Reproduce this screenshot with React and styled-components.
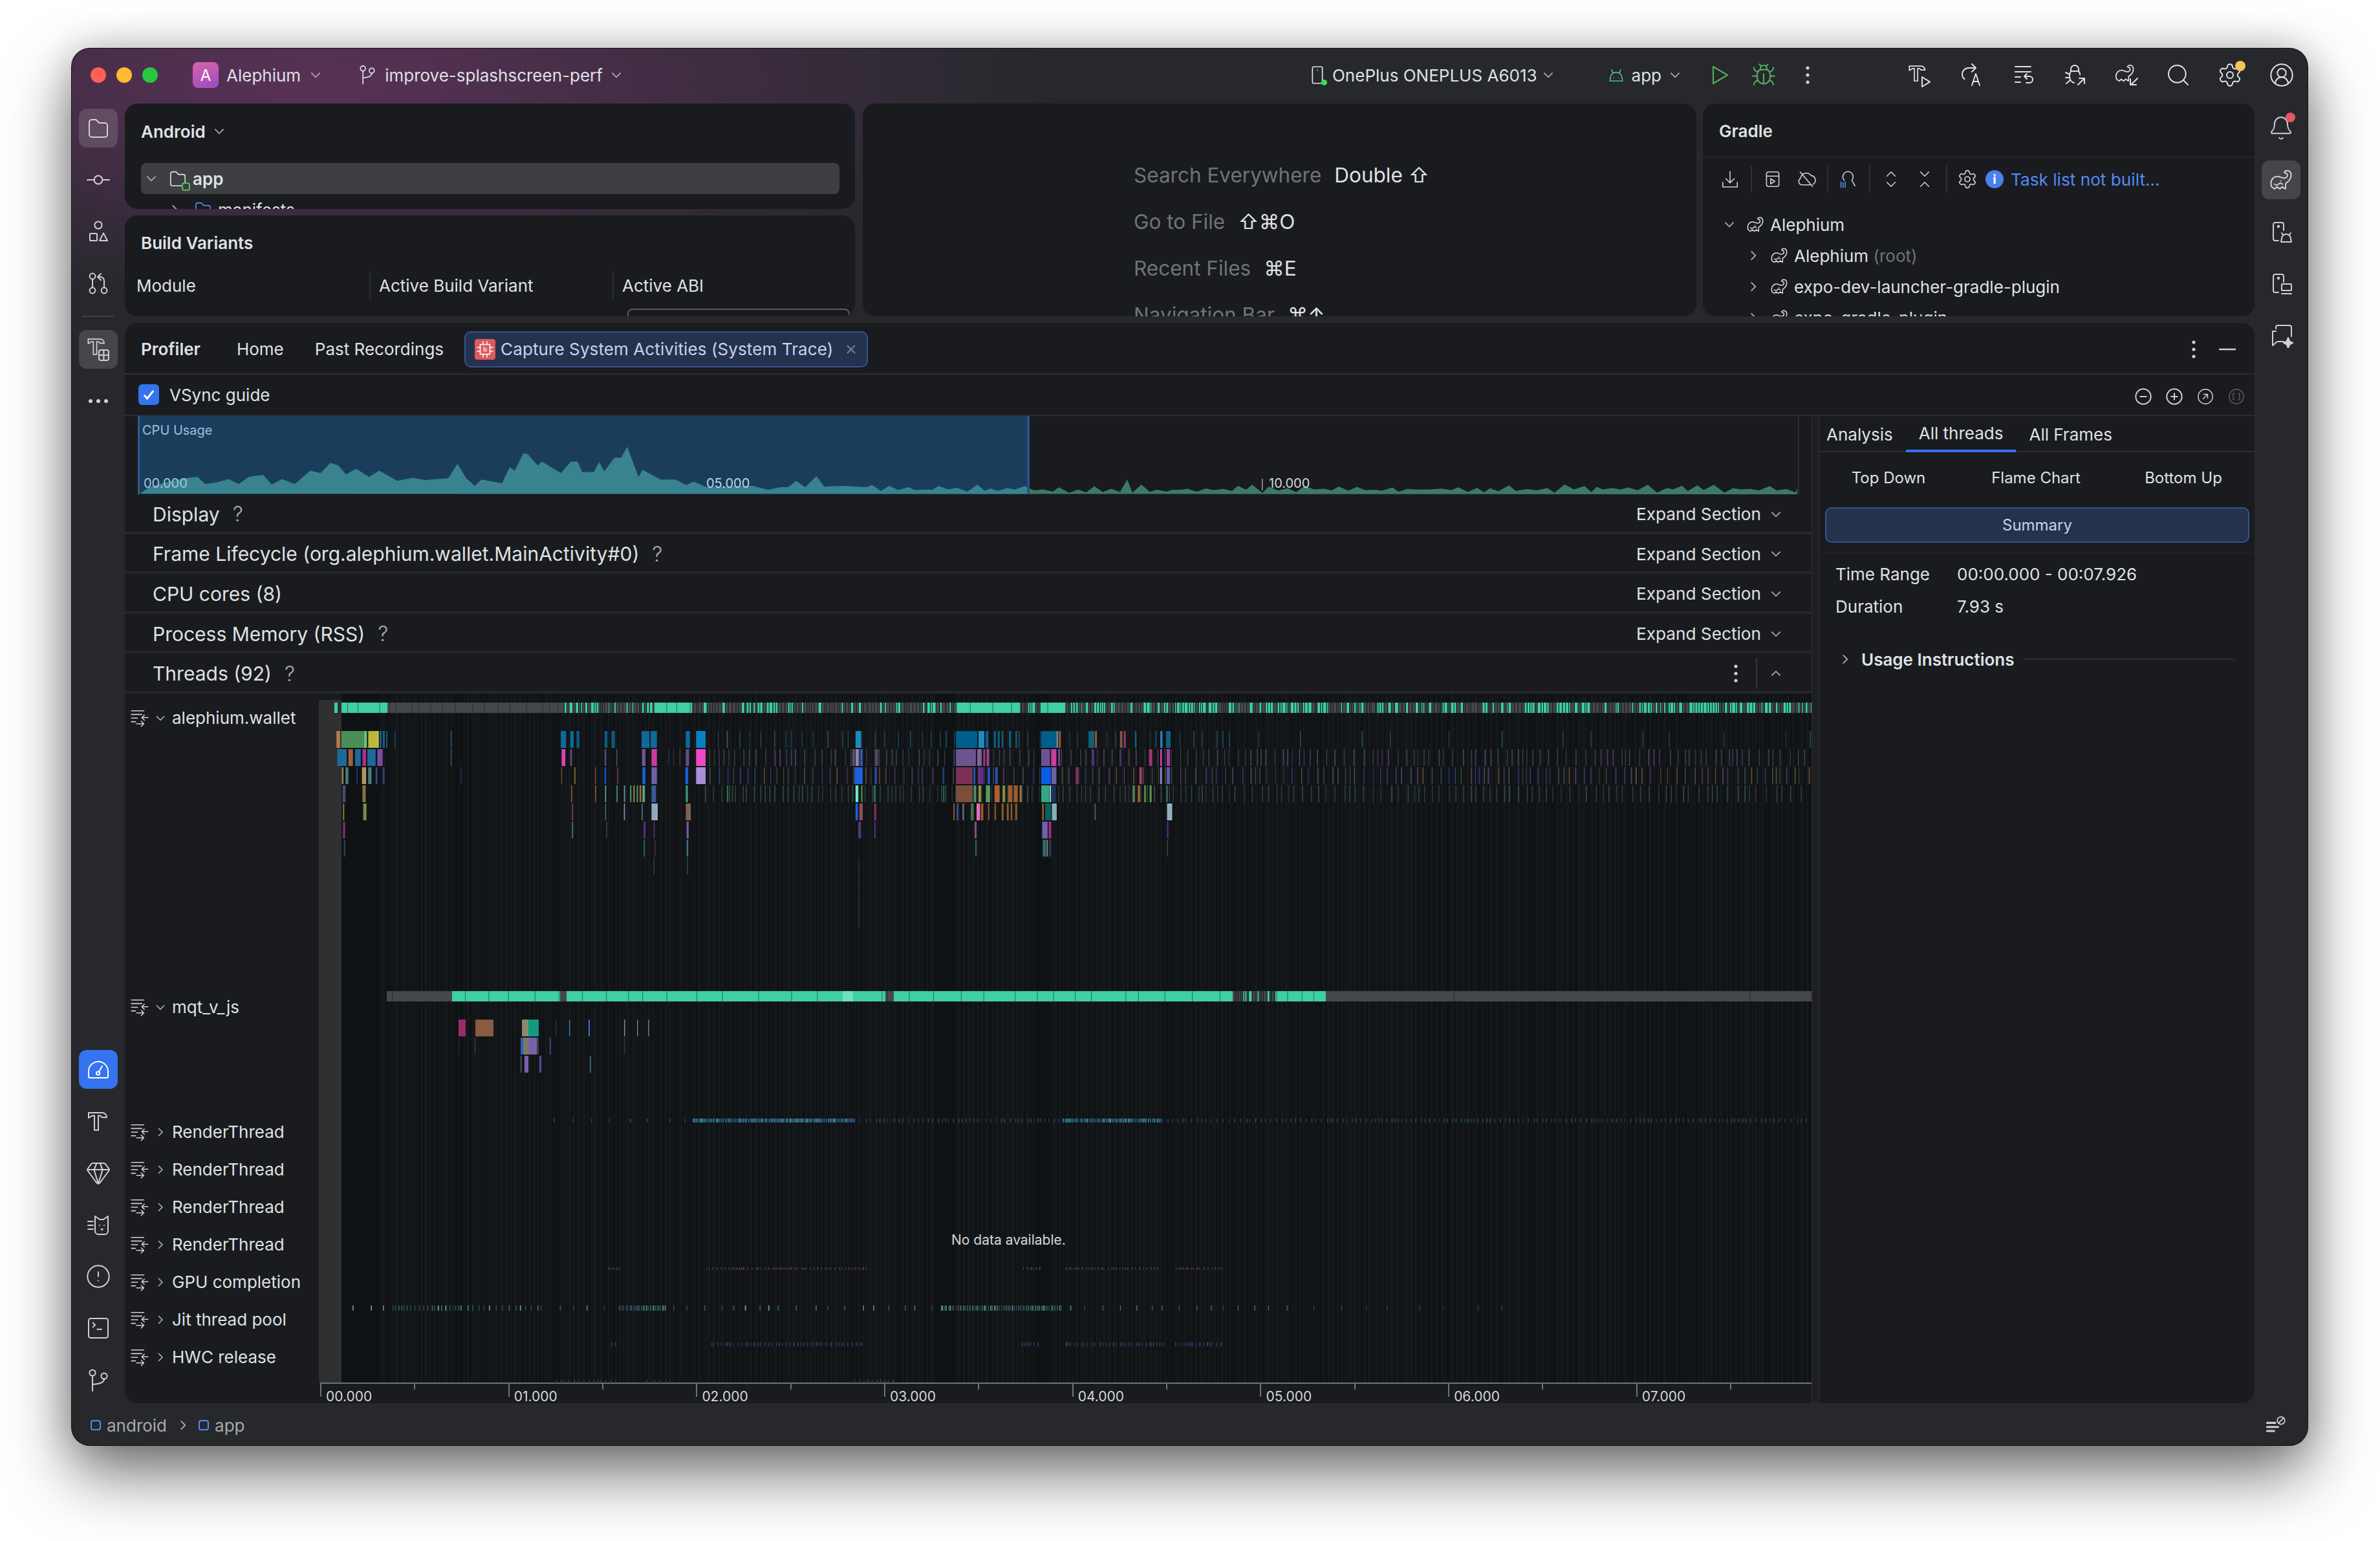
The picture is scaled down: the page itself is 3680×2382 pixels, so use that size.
import React from "react";
import styled, { createGlobalStyle } from "styled-components";
import {
  Bell,
  Bug,
  CircleAlert,
  CircleMinus,
  CirclePlus,
  CircleUserRound,
  Gem,
  Search,
  Settings,
  SquareTerminal,
} from "lucide-react";

const Global = createGlobalStyle`
  html, body {
    margin: 0;
    background: #fff;
    width: 3680px;
    height: 2382px;
    overflow: hidden;
  }
  * {
    box-sizing: border-box;
  }
`;

const FONT = `Inter, "Noto Sans", "DejaVu Sans", sans-serif`;

const Page = styled.div`
  padding: 75px 112px 148px 111px;
  font-family: ${FONT};
  font-size: 26px;
  color: #dfe1e5;
  white-space: nowrap;
`;

const Window = styled.div`
  display: flex;
  flex-direction: column;
  width: 3457px;
  height: 2159px;
  border-radius: 28px;
  overflow: hidden;
  background:
    radial-gradient(1150px 340px at 380px 50px, rgba(104, 52, 100, 0.78), transparent 100%),
    #26282c;
  box-shadow:
    0 0 0 1px #111,
    0 44px 100px rgba(0, 0, 0, 0.55),
    0 0 60px rgba(0, 0, 0, 0.2);
`;

const TitleBar = styled.div`
  display: flex;
  align-items: center;
  height: 85px;
  flex: none;
  padding: 0 20px 3px 29px;
`;

const Lights = styled.div`
  display: flex;
  gap: 16px;
  margin-right: 54px;
`;

const Light = styled.span`
  width: 24px;
  height: 24px;
  border-radius: 50%;
  background: ${(p) => p.$color};
`;

const ProjectBadge = styled.span`
  width: 40px;
  height: 40px;
  border-radius: 8px;
  background: linear-gradient(160deg, #d863a8, #9a4cc4);
  color: #fff;
  font-size: 24px;
  display: flex;
  align-items: center;
  justify-content: center;
`;

const TitleItem = styled.div`
  display: flex;
  align-items: center;
  gap: ${(p) => p.$gap ?? 11}px;
  margin-left: ${(p) => p.$left ?? 0};
  margin-right: ${(p) => p.$right ?? 0}px;
`;

const Body = styled.div`
  display: flex;
  flex: 1;
  min-height: 0;
`;

const Strip = styled.div`
  width: 82px;
  flex: none;
  display: flex;
  flex-direction: column;
  align-items: center;
  gap: 20px;
  padding: 8px 0 6px;
  color: #ced0d6;
`;

const StripBottom = styled.div`
  margin-top: auto;
  display: flex;
  flex-direction: column;
  align-items: center;
  gap: 20px;
`;

const ToolButton = styled.div`
  width: 60px;
  height: 60px;
  border-radius: 12px;
  display: flex;
  align-items: center;
  justify-content: center;
  background: ${(p) =>
    p.$active ? "#3574f0" : p.$selected ? "rgba(255,255,255,0.14)" : "transparent"};
  color: ${(p) => (p.$active ? "#fff" : "#ced0d6")};
`;

const StripSep = styled.div`
  width: 50px;
  height: 2px;
  background: #3c3f44;
`;

const Center = styled.div`
  flex: 1;
  min-width: 0;
  display: flex;
  flex-direction: column;
  gap: 10px;
`;

const TopRow = styled.div`
  display: flex;
  height: 329px;
  flex: none;
`;

const TopColumn = styled.div`
  width: 1129px;
  flex: none;
  display: flex;
  flex-direction: column;
  gap: 10px;
  margin-right: 12px;
`;

const Panel = styled.div`
  background: #191b1e;
  border-radius: 20px;
  overflow: hidden;
  position: relative;
`;

const AndroidPanel = styled(Panel)`
  height: 163px;
  padding: 0 24px 0 25px;
`;

const BuildPanel = styled(Panel)`
  height: 156px;
`;

const PanelTitle = styled.div`
  display: flex;
  align-items: center;
  gap: 10px;
  height: 86px;
  font-weight: 600;
  color: #dfe1e5;
  flex: none;
`;

const BuildTitle = styled.div`
  height: 84px;
  padding-left: 25px;
  display: flex;
  align-items: center;
  font-weight: 600;
`;

const TreeSelected = styled.div`
  height: 48px;
  margin-top: 6px;
  border-radius: 8px;
  background: #3d3f43;
  display: flex;
  align-items: center;
  font-weight: 600;
  padding-left: 5px;
  gap: 7px;
`;

const TreeRow = styled.div`
  height: 48px;
  display: flex;
  align-items: center;
  padding-left: ${(p) => p.$indent}px;
  gap: ${(p) => p.$gap ?? 7}px;
`;

const Spacer = styled.span`
  width: ${(p) => p.$w}px;
  flex: none;
`;

const ModuleTag = styled.span`
  position: absolute;
  right: -3px;
  bottom: -3px;
  width: 13px;
  height: 13px;
  border: 2px solid #5fb865;
  border-radius: 4px;
  background: #3d3f43;
`;

const VariantHead = styled.div`
  display: grid;
  grid-template-columns: 360px 376px 1fr;
  height: 44px;
  margin-left: 18px;
  margin-top: 2px;
`;

const VariantCell = styled.div`
  display: flex;
  align-items: center;
  position: relative;
  &:not(:first-child) {
    padding-left: 13px;
    border-left: 2px solid #2b2d30;
  }
`;

const ComboTop = styled.div`
  position: absolute;
  left: 777px;
  right: 8px;
  bottom: -20px;
  height: 32px;
  border: 2px solid #5a5d63;
  border-radius: 8px;
`;

const EmptyPanel = styled(Panel)`
  width: 1289px;
  flex: none;
  margin-right: 10px;
  padding: 74px 0 0 419px;
`;

const HintRow = styled.div`
  height: 72px;
  display: flex;
  align-items: center;
  gap: 20px;
  font-size: 31.5px;
  color: #6f737a;
`;

const HintKey = styled.span`
  color: #dfe1e5;
`;

const GradlePanel = styled(Panel)`
  flex: 1;
  min-width: 0;
`;

const GradleHead = styled.div`
  height: 84px;
  padding: 2px 0 0 25px;
  display: flex;
  align-items: center;
  font-weight: 600;
  border-bottom: 2px solid #25272b;
`;

const GradleTools = styled.div`
  height: 66px;
  display: flex;
  align-items: center;
  padding-left: 26px;
  color: #ced0d6;
`;

const ToolSlot = styled.span`
  width: ${(p) => p.$w ?? 52}px;
  flex: none;
  display: flex;
  align-items: center;
  justify-content: flex-start;
`;

const ToolSep = styled.span`
  width: 2px;
  height: 42px;
  background: #2f3135;
  flex: none;
  margin-right: ${(p) => p.$after ?? 16}px;
`;

const InfoDot = styled.span`
  width: 28px;
  height: 28px;
  border-radius: 50%;
  background: #4a80ee;
  color: #fff;
  font-size: 20px;
  font-weight: 700;
  display: flex;
  align-items: center;
  justify-content: center;
  flex: none;
`;

const LinkText = styled.span`
  color: #548af7;
  margin-left: 11px;
  font-size: 26.2px;
`;

const GradleTree = styled.div`
  padding-top: 13px;
`;

const TreeName = styled.span`
  margin-left: -6px;
`;

const Muted = styled.span`
  color: #6f737a;
`;

const MainPanel = styled(Panel)`
  flex: 1;
  min-height: 0;
  display: flex;
  flex-direction: column;
`;

const TabBar = styled.div`
  height: 80px;
  flex: none;
  display: flex;
  align-items: center;
  padding: 3px 22px 0 25px;
  border-bottom: 2px solid #2b2d30;
`;

const ToolTitle = styled.span`
  font-weight: 600;
  margin-right: 56px;
`;

const PlainTab = styled.span`
  margin-right: ${(p) => p.$right}px;
`;

const CaptureTab = styled.div`
  height: 56px;
  width: 624px;
  display: flex;
  align-items: center;
  padding: 0 14px;
  gap: 8px;
  background: #25324d;
  border: 2px solid #35538f;
  border-radius: 10px;
  color: #c5d2ee;
  letter-spacing: 0.1px;
`;

const ChipIcon = styled.span`
  width: 32px;
  height: 32px;
  border-radius: 4px;
  background: #db5c5c;
  flex: none;
  display: flex;
  align-items: center;
  justify-content: center;
`;

const TabClose = styled.span`
  margin-left: auto;
  color: #7e8594;
  display: flex;
`;

const PushRight = styled.div`
  margin-left: auto;
  margin-top: ${(p) => p.$top ?? 0}px;
  display: flex;
  align-items: center;
  gap: ${(p) => p.$gap ?? 20}px;
  color: #ced0d6;
`;

const VsyncRow = styled.div`
  height: 64px;
  flex: none;
  display: flex;
  align-items: center;
  padding: 0 14px 0 21px;
  gap: 16px;
  border-bottom: 2px solid #2b2d30;
`;

const CheckBox = styled.span`
  width: 32px;
  height: 32px;
  border-radius: 6px;
  background: #3574f0;
  display: flex;
  align-items: center;
  justify-content: center;
`;

const Split = styled.div`
  flex: 1;
  min-height: 0;
  display: flex;
`;

const LeftPane = styled.div`
  width: 2608px;
  flex: none;
  display: flex;
  flex-direction: column;
`;

const PaneGutter = styled.div`
  width: 13px;
  flex: none;
  background: #1d1f22;
  border-left: 2px solid #25272b;
  border-right: 2px solid #25272b;
`;

const RightPane = styled.div`
  flex: 1;
  min-width: 0;
`;

const CpuWrap = styled.div`
  height: 121px;
  flex: none;
  margin: 0 19px 0 20px;
  position: relative;
  border-right: 2px solid #2b2d30;
`;

const CpuLabel = styled.span`
  position: absolute;
  left: ${(p) => p.$x}px;
  top: ${(p) => p.$y}px;
  font-size: 20px;
  line-height: 24px;
  color: ${(p) => p.$color ?? "#d2d6de"};
`;

const SectionRow = styled.div`
  height: 61.6px;
  flex: none;
  display: flex;
  align-items: center;
  padding: 4px 44px 0 43px;
  border-bottom: 4px solid #25272b;
  font-size: 30px;
`;

const Question = styled.span`
  font-size: 32px;
  font-weight: 300;
  color: #a8abb1;
  margin-left: 20px;
`;

const ExpandLabel = styled.span`
  margin-left: auto;
  font-size: 26.2px;
  display: flex;
  align-items: center;
  gap: 12px;
`;

const DottedSep = styled.span`
  width: 0;
  height: 46px;
  border-left: 2px dotted #4a4d52;
`;

const CollapseArrow = styled.span`
  display: flex;
  margin-left: 7px;
`;

const ThreadBody = styled.div`
  flex: 1;
  min-height: 0;
  display: flex;
`;

const LabelColumn = styled.div`
  width: 300px;
  flex: none;
  padding: 14px 0 0 7px;
`;

const ThreadLabel = styled.div`
  height: ${(p) => p.$height}px;
  display: flex;
  align-items: flex-start;
`;

const ThreadLine = styled.div`
  height: 48px;
  display: flex;
  align-items: center;
  gap: 6px;
`;

const ThreadName = styled.span`
  margin-left: 2px;
`;

const ChartColumn = styled.div`
  flex: 1;
  min-width: 0;
  display: flex;
  flex-direction: column;
  position: relative;
`;

const NoData = styled.span`
  position: absolute;
  left: 978px;
  top: 833px;
  font-size: 21px;
  line-height: 24px;
  color: #d4d6da;
`;

const Axis = styled.div`
  flex: 1;
  display: flex;
  margin-left: 2px;
  border-top: 2px solid #6f7276;
  overflow: hidden;
  font-size: 21px;
  color: #d4d6da;
`;

const AxisCell = styled.div`
  width: 145.35px;
  flex: none;
  position: relative;
  padding: 7px 0 0 9px;
  line-height: 26px;
  &::before {
    content: "";
    position: absolute;
    left: 0;
    top: 0;
    width: 2px;
    height: ${(p) => (p.$major ? 20 : 9)}px;
    background: #6f7276;
  }
`;

const AnalysisTabs = styled.div`
  height: 56px;
  display: flex;
  border-bottom: 2px solid #2b2d30;
`;

const AnalysisTab = styled.div`
  height: 56px;
  padding: 0 20px;
  display: flex;
  align-items: center;
  border-bottom: ${(p) => (p.$active ? "4px solid #3574f0" : "none")};
  &:first-child {
    padding-left: 10px;
  }
`;

const SubTabs = styled.div`
  display: grid;
  grid-template-columns: repeat(3, 228px);
  height: 78px;
  margin-left: -8px;
  font-size: 24px;
`;

const SubTab = styled.div`
  display: flex;
  align-items: center;
  justify-content: center;
`;

const SummaryWrap = styled.div`
  padding: 7px 8px 14px;
  border-bottom: 2px solid #1f2124;
`;

const SummaryButton = styled.div`
  height: 55px;
  display: flex;
  align-items: center;
  justify-content: center;
  background: #25324d;
  border: 2px solid #35538f;
  border-radius: 10px;
  color: #c5d2ee;
  font-size: 24px;
`;

const InfoGrid = styled.div`
  display: grid;
  grid-template-columns: 188px 1fr;
  grid-auto-rows: 50px;
  padding: 7px 0 0 24px;
  align-items: center;
`;

const UsageRow = styled.div`
  height: 50px;
  margin-top: 32px;
  display: flex;
  align-items: center;
  padding: 0 31px 0 28px;
  gap: 14px;
  font-weight: 600;
`;

const UsageLine = styled.span`
  flex: 1;
  height: 2px;
  background: #2b2d30;
`;

const StatusBar = styled.div`
  height: 65px;
  flex: none;
  display: flex;
  align-items: center;
  padding: 3px 32px 0 29px;
  gap: 12px;
  color: #a6a9af;
`;

const ModuleDot = styled.span`
  width: 16px;
  height: 16px;
  border: 2px solid #548af7;
  border-radius: 4px;
  flex: none;
  margin-right: -3px;
`;

const CrumbArrow = styled.span`
  display: flex;
  margin: 0 1px 0 2px;
`;

const STROKE = { fill: "none", stroke: "currentColor", strokeWidth: 1, strokeLinecap: "round", strokeLinejoin: "round" };

const ELEPHANT =
  "M12.5 4.2C13 2.8 15.5 2.3 16.8 3.6c1.6 1.6 1.2 4.4-.2 6.4-1 1.4-2 2.2-3 2.8l-.2 4.2-2.4-1.6-2 1.6-2-1.6-2 1.6-2.5-1.8-.3-2.7c0-3 2.4-5.3 5.4-5.1 2.2.2 4 2 6 1 1.4-.7 1.8-2.4.8-3.2-.6-.5-1.2-.2-1.9-1z";
const HAMMER = "M2.5 3.5H13c2 0 3.5 1.6 3.5 3.6H13l-1.5-1.4H10V17H7V5.7H5.5L2.5 7.5z";

const ICONS = {
  folder: <path d="M3 5.5c0-1.1.9-2 2-2h3.2L10.6 6H15a2 2 0 0 1 2 2v7a2 2 0 0 1-2 2H5a2 2 0 0 1-2-2z" />,
  commit: (
    <>
      <circle cx="10" cy="10" r="3.2" />
      <path d="M1.5 10h5.3M13.2 10h5.3" />
    </>
  ),
  structure: (
    <>
      <circle cx="10" cy="5" r="2.8" />
      <rect x="3.5" y="11.5" width="5.5" height="5.5" rx=".5" />
      <path d="M14 11.2l3 5.8h-6z" />
    </>
  ),
  pull: (
    <>
      <circle cx="5.5" cy="4.5" r="2.2" />
      <circle cx="5.5" cy="15.5" r="2.2" />
      <circle cx="14.5" cy="15.5" r="2.2" />
      <path d="M5.5 6.7v6.6M14.5 13.3V8a3 3 0 0 0-3-3H10M12 2.5L9.5 5l2.5 2.5" />
    </>
  ),
  hammerTable: (
    <>
      <path d={HAMMER} transform="translate(0 -1) scale(.88)" />
      <rect x="10.5" y="10.5" width="7.5" height="8" rx="1.5" />
      <path d="M10.5 14.5H18M14.2 10.5v8" />
    </>
  ),
  hammer: <path d={HAMMER} />,
  hammerRun: (
    <>
      <path d={HAMMER} transform="scale(.86)" />
      <path d="M12 11.5l6 3.8-6 3.7z" />
    </>
  ),
  cast: (
    <>
      <path d="M8 4.5C5 4.5 3 6.8 3 9.5c0 1.500.7 2.800 1.800 3.600M8 4.5h5M10.500 1.500l3 3-3 3" />
      <path d="M10.500 18l3-9 3 9M11.600 15h3.800" />
    </>
  ),
  sync: <path d="M4 3.5h12M4 7.500h12M4 11.500h4M4 15.500h4M11 11h4a2.500 2.500 0 0 1 0 5h-2.500M13 9l-2 2 2 2" />,
  bugArrow: (
    <>
      <path d="M10 2.500a3 3 0 0 1 3 3v1.500H7V5.500a3 3 0 0 1 3-3zM7 7c-.7 1-1 2.500-1 4 0 2.500 1.400 4.500 3.500 5M13 7c.6.7 1 1.600 1.100 2.700" />
      <path d="M3 8l3 1.500M3 12h3M3.500 16.500L6.500 14M12.500 17.500l5-5M13.500 12.500h4v4" />
    </>
  ),
  gradleArrow: (
    <>
      <path d={ELEPHANT} transform="scale(.86)" />
      <path d="M18.500 12.500l-5 5M13 13v4.500h4.500" />
    </>
  ),
  elephant: (
    <>
      <path d={ELEPHANT} />
      <path d="M9.800 10.800h.01M5 13.300c1 1 2 1 3 0s2-1 3 0" />
    </>
  ),
  phoneAndroid: (
    <>
      <path d="M8 17H5.500A1.500 1.500 0 0 1 4 15.500v-11A1.500 1.500 0 0 1 5.500 3h5A1.500 1.500 0 0 1 12 4.500V9" />
      <circle cx="8" cy="6" r=".6" />
      <path d="M10 18l.5-2.500a3.500 3.500 0 0 1 7 0L18 18zM11.500 12.500l-1-1.500M16.500 12.500l1-1.500" />
    </>
  ),
  phoneLaptop: (
    <>
      <path d="M8 17H5.500A1.500 1.500 0 0 1 4 15.500v-11A1.500 1.500 0 0 1 5.500 3h5A1.500 1.500 0 0 1 12 4.500V9" />
      <circle cx="8" cy="6" r=".6" />
      <rect x="10.500" y="10.500" width="7.500" height="5" rx=".5" />
      <path d="M10.500 18H18" />
    </>
  ),
  chatSpark: (
    <>
      <path d="M6 5V4a1.500 1.500 0 0 1 1.500-1.500h9A1.500 1.500 0 0 1 18 4v7M6 7H3.500v11L7 15h5" />
      <path d="M15.500 12l1.200 2.800 2.300 1.200-2.300 1.200-1.200 2.800-1.200-2.800-2.300-1.200 2.300-1.200z" fill="currentColor" />
    </>
  ),
  gauge: (
    <>
      <path d="M2.500 15.500v-4a7.500 7.500 0 0 1 15 0v4a1 1 0 0 1-1 1h-13a1 1 0 0 1-1-1z" />
      <circle cx="9.800" cy="13" r="1.300" />
      <path d="M10.500 11.800L13 7.500" />
    </>
  ),
  cat: (
    <>
      <path d="M7.500 3.500l3.500 2.500h3l3.500-2.500V15a2.500 2.500 0 0 1-2.500 2.500h-5A2.500 2.500 0 0 1 7.500 15zM2 7.500h4M2 10.500h4M2 13.500h4" />
      <path d="M11 10.500h.01M14.500 10.500h.01M12.300 13.500l.5.5.5-.5" />
    </>
  ),
  vcs: (
    <>
      <circle cx="5.500" cy="4.500" r="2.300" />
      <circle cx="14.500" cy="7" r="2.300" />
      <path d="M5.500 6.800V18.500M14.500 9.300c0 2.800-3 3.700-9 4.200" />
    </>
  ),
  thread: (
    <path d="M2 3h12M2 6.500h10M2 10h6M2 13.500h4M18 9.500h-6M14.500 7l-2.500 2.500L14.500 12M7 15.500h7M11.500 13l2.500 2.500-2.500 2.500" />
  ),
  branch: (
    <>
      <circle cx="6" cy="4" r="2.300" />
      <circle cx="14" cy="6" r="2.300" />
      <path d="M6 6.300V18M14 8.300c0 3-2.800 4-8 4.200" />
    </>
  ),
  device: <path d="M6.500 2.500h7a1 1 0 0 1 1 1v13a1 1 0 0 1-1 1h-7a1 1 0 0 1-1-1v-13a1 1 0 0 1 1-1zM10 5.500h.01" />,
  android: (
    <path d="M3 16.500l.5-3a6.500 6.500 0 0 1 13 0l.5 3zM6.500 8L5 4M13.500 8L15 4M7.500 13h.01M12.500 13h.01" />
  ),
  download: <path d="M10 2.500v11M6 9.500l4 4 4-4M3 13v4.500h14V13" />,
  runTasks: (
    <>
      <rect x="4" y="3" width="12" height="14" rx="2" />
      <path d="M4 7h12M8 9.500l4 2.500-4 2.500z" />
    </>
  ),
  offline: (
    <path d="M5.500 15.500A3.500 3.500 0 0 1 4.500 9a5.500 5.500 0 0 1 10-2.500 4.500 4.500 0 0 1 1.800 8.500M4 3l12 14M5.500 15.500H14" />
  ),
  analyze: (
    <>
      <path d="M6.500 11a5 5 0 1 1 7.500 0l3 5.500" />
      <path d="M3.500 12.500V18M5.500 13.500V18M7.500 12.500V18" stroke="#548af7" />
    </>
  ),
  expand: <path d="M6 7l4-4 4 4M6 13l4 4 4-4" />,
  collapse: <path d="M6 3l4 4 4-4M6 17l4-4 4 4" />,
  fit: (
    <>
      <circle cx="10" cy="10" r="8" />
      <path d="M8 7.500h4.500V12M12.500 7.500L7.500 12.500" />
    </>
  ),
  frame: (
    <>
      <circle cx="10" cy="10" r="8" />
      <path d="M8 6.500H6.500v7H8M12 6.500h1.500v7H12" />
    </>
  ),
  eventLog: (
    <>
      <path d="M3 8h7M3 11.500h9.500M3 15h6" strokeWidth="1.700" />
      <circle cx="15" cy="6" r="3.200" />
      <path d="M13 8l4-4" />
    </>
  ),
  chip: (
    <>
      <rect x="5" y="5" width="10" height="10" stroke="#fff" />
      <path d="M8 2v3M12 2v3M8 15v3M12 15v3M2 8h3M2 12h3M15 8h3M15 12h3M9 8v4M11 9v3" stroke="#fff" />
    </>
  ),
};

const Ico = ({ name, size = 40, color }) => (
  <svg width={size} height={size} viewBox="0 0 20 20" {...STROKE} style={{ color, flex: "none" }}>
    {ICONS[name]}
  </svg>
);

const Chevron = ({ dir = "down", size = 22, color = "#a8abb1" }) => {
  const d = {
    down: "M4 7l6 6 6-6",
    up: "M4 13l6-6 6 6",
    right: "M7 4l6 6-6 6",
  }[dir];
  return (
    <svg width={size} height={size} viewBox="0 0 20 20" fill="none" stroke={color} strokeWidth="1.700" style={{ flex: "none" }}>
      <path d={d} />
    </svg>
  );
};

const Kebab = () => (
  <svg width="40" height="40" viewBox="0 0 20 20" fill="#ced0d6" style={{ flex: "none" }}>
    <circle cx="10" cy="4.500" r="1.300" />
    <circle cx="10" cy="10" r="1.300" />
    <circle cx="10" cy="15.500" r="1.300" />
  </svg>
);

const Dots = () => (
  <svg width="40" height="12" viewBox="0 0 40 12" fill="#ced0d6">
    <circle cx="8" cy="6" r="3" />
    <circle cx="20" cy="6" r="3" />
    <circle cx="32" cy="6" r="3" />
  </svg>
);

const Badge = styled.span`
  position: absolute;
  right: ${(p) => p.$right}px;
  top: ${(p) => p.$top}px;
  width: ${(p) => p.$size}px;
  height: ${(p) => p.$size}px;
  border-radius: 50%;
  background: ${(p) => p.$color};
`;

const IconWrap = styled.span`
  position: relative;
  display: flex;
`;

const CPU_PTS = [
  [148, 665], [165, 640], [200, 620], [235, 605], [260, 600], [275, 628], [300, 620], [320, 608],
  [340, 628], [360, 600], [388, 592], [405, 630], [425, 608], [450, 628], [480, 575], [500, 585],
  [520, 545], [535, 555], [550, 590], [570, 568], [595, 600], [615, 575], [650, 615], [680, 603],
  [705, 612], [750, 605], [768, 548], [785, 605], [802, 635], [815, 610], [855, 625], [870, 562],
  [880, 575], [897, 507], [905, 510], [925, 555], [933, 540], [970, 585], [990, 540], [1003, 540],
  [1012, 582], [1035, 580], [1045, 542], [1055, 578], [1075, 525], [1088, 525], [1100, 482],
  [1122, 600], [1130, 572], [1165, 610], [1195, 610], [1215, 632], [1230, 618], [1255, 640],
  [1345, 635], [1375, 650], [1400, 640], [1415, 640], [1430, 615], [1448, 640], [1470, 597],
  [1485, 638], [1520, 635], [1568, 640],
].map(([zx, zy]) => [100 + zx / 1.2645 - 213, 500 + zy / 2.529 - 643]);

function mulberry(seed) {
  let a = seed;
  return () => {
    a = (a + 0x6d2b79f5) | 0;
    let t = Math.imul(a ^ (a >>> 15), 1 | a);
    t = (t + Math.imul(t ^ (t >>> 7), 61 | t)) ^ t;
    return ((t ^ (t >>> 14)) >>> 0) / 4294967296;
  };
}

function cpuPath() {
  const rand = mulberry(7);
  const pts = [...CPU_PTS];
  let x = pts[pts.length - 1][0];
  let up = true;
  while (x < 2566) {
    x += 8 + rand() * 9;
    const y = up ? 106 + rand() * 8 : 113 + rand() * 6;
    pts.push([Math.min(x, 2566), rand() < 0.02 && up ? 98 : y]);
    up = !up;
  }
  pts.push([2566, 121]);
  return "M" + pts.map((p) => `${p[0].toFixed(1)} ${p[1].toFixed(1)}`).join("L") + "Z";
}

const CPU_D = cpuPath();

const CpuChart = () => (
  <svg width="2567" height="121" viewBox="0 0 2567 121" style={{ display: "block" }}>
    <defs>
      <clipPath id="sel">
        <rect width="1378" height="121" />
      </clipPath>
      <clipPath id="rest">
        <rect x="1378" width="1200" height="121" />
      </clipPath>
    </defs>
    <rect width="1378" height="121" fill="#1b3d5c" />
    <rect width="3" height="121" fill="#2d5a8c" />
    <path d={CPU_D} fill="#39838f" clipPath="url(#sel)" />
    <path d={CPU_D} fill="#3c7a68" clipPath="url(#rest)" />
    <rect x="1375" width="4" height="121" fill="#2d4f88" />
    <rect x="1738" y="97" width="1.500" height="18" fill="#9a9da3" />
  </svg>
);

const X0 = 493;
const Y0 = 1072;
const GREEN = "#3ecfa2";
const GREY = "#45474a";
const SEAM = "#2a6a5c";
const fromA = (zx) => 480 + zx / 1.568;
const fromB = (zx) => 1100 + zx / 2.01;
const rowY = (r) => 1130 + r * 28;

const FLAMES_A = [
  [0, 63, 72, "#b87a48"], [0, 75, 130, "#4a8f55"], [0, 130, 137, "#70c070"], [0, 140, 163, "#b8b83c"], [0, 163, 165, "#f0e040"],
  [0, 168, 172, "#1a6a9a"], [0, 176, 180, "#1a6a9a"], [0, 184, 186, "#1a6a9a"], [0, 204, 205, "#184a66"], [0, 340, 341, "#285a78"],
  [0, 607, 620, "#0d6a9a"], [0, 630, 638, "#0d6a9a"], [0, 645, 652, "#0d5a80"], [0, 713, 720, "#0d5a80"], [0, 730, 738, "#0d5a80"],
  [0, 803, 822, "#0d6a9a"], [0, 825, 840, "#0d6a9a"], [0, 910, 920, "#0d6a9a"], [0, 935, 958, "#0b80c0"], [0, 1010, 1011, "#6a3a55"],
  [1, 65, 88, "#1a6a9a"], [1, 92, 103, "#a06030"], [1, 108, 122, "#1a6a9a"], [1, 126, 135, "#a83090"], [1, 138, 158, "#1a6a9a"], [1, 162, 175, "#7a4aa0"],
  [1, 340, 341, "#504a68"], [1, 609, 618, "#e040b0"], [1, 630, 634, "#605080"], [1, 713, 717, "#504870"], [1, 742, 744, "#504870"],
  [1, 804, 812, "#705a90"], [1, 827, 840, "#c83da0"], [1, 910, 918, "#604f80"], [1, 935, 958, "#f048c8"],
  [2, 76, 80, "#a08060"], [2, 85, 92, "#4a7a80"], [2, 112, 114, "#303a80"], [2, 125, 135, "#a89a60"], [2, 140, 148, "#4a7a80"], [2, 158, 162, "#3a4a90"], [2, 175, 180, "#3a3a70"],
  [2, 364, 365, "#28305a"], [2, 608, 609, "#6a4a30"], [2, 640, 642, "#8a8030"], [2, 690, 692, "#804040"], [2, 713, 717, "#1a50c0"], [2, 744, 745, "#704050"],
  [2, 805, 812, "#1860d8"], [2, 827, 840, "#7060a8"], [2, 909, 916, "#1860d8"], [2, 935, 958, "#a890d8"],
  [3, 78, 85, "#504a70"], [3, 126, 134, "#8a7040"], [3, 632, 634, "#a05a30"], [3, 690, 692, "#a05a30"], [3, 714, 717, "#50a090"], [3, 742, 745, "#4a8a70"],
  [3, 760, 763, "#5090b0"], [3, 775, 778, "#5a9a60"], [3, 783, 786, "#8a9a50"], [3, 791, 794, "#5a9a60"], [3, 798, 802, "#a06a40"], [3, 805, 811, "#60a080"],
  [3, 827, 838, "#3a5a9a"], [3, 910, 915, "#30a080"], [3, 1010, 1012, "#3a8a70"],
  [4, 79, 82, "#8a8040"], [4, 128, 136, "#7a8a50"], [4, 634, 637, "#803060"], [4, 714, 717, "#4a5a70"], [4, 760, 762, "#80a0b0"], [4, 803, 806, "#4a6a70"],
  [4, 827, 842, "#90a8c0"], [4, 910, 922, "#806050"],
  [5, 79, 84, "#803070"], [5, 634, 637, "#407070"], [5, 717, 719, "#603060"], [5, 808, 812, "#6030a0"], [5, 832, 835, "#503070"], [5, 912, 917, "#7060a8"],
  [6, 81, 84, "#205070"], [6, 808, 811, "#207060"], [6, 835, 837, "#502a40"], [6, 912, 916, "#407080"],
  [7, 832, 834, "#204060"], [7, 913, 915, "#205050"],
];

const FLAMES_B = [
  [0, 448, 465, "#1a8cc0"], [0, 760, 826, "#005f8a"], [0, 830, 848, "#1a8cc0"], [0, 852, 860, "#0d5f8a"], [0, 878, 884, "#0d5f8a"], [0, 890, 896, "#10607a"], [0, 902, 906, "#10607a"],
  [0, 925, 931, "#0d5f8a"], [0, 945, 950, "#10607a"], [0, 1025, 1072, "#005f8a"], [0, 1073, 1075, "#a0c0d0"], [0, 1080, 1086, "#a05a28"], [0, 1172, 1190, "#10607a"], [0, 1192, 1198, "#8a5a40"],
  [0, 1270, 1276, "#8a5a30"], [0, 1282, 1288, "#a03070"], [0, 1316, 1320, "#10607a"], [0, 1395, 1402, "#2080c0"], [0, 1413, 1427, "#0d6080"],
  [1, 438, 446, "#5a5070"], [1, 448, 458, "#9080b0"], [1, 463, 470, "#2a60c0"], [1, 508, 518, "#504a60"], [1, 760, 822, "#6a5590"], [1, 826, 840, "#8060a0"], [1, 845, 850, "#a03a90"], [1, 855, 862, "#a03a90"],
  [1, 1025, 1052, "#6a5590"], [1, 1056, 1072, "#c83da0"], [1, 1078, 1083, "#9a40c0"], [1, 1184, 1190, "#4a3080"], [1, 1270, 1274, "#4a3080"], [1, 1360, 1370, "#a0357a"], [1, 1395, 1400, "#e040b0"], [1, 1415, 1425, "#a040a0"],
  [2, 445, 470, "#1a60e0"], [2, 508, 514, "#2a50b0"], [2, 760, 812, "#7a3055"], [2, 815, 820, "#1860d0"], [2, 828, 845, "#6a2a80"], [2, 858, 866, "#2a50b0"], [2, 882, 890, "#2a50b0"],
  [2, 720, 724, "#1a3a80"], [2, 1025, 1055, "#0a5ce8"], [2, 1057, 1072, "#7060a0"], [2, 1132, 1140, "#8a3060"], [2, 1330, 1338, "#a04070"], [2, 1395, 1400, "#a090d0"], [2, 1415, 1425, "#5060b0"],
  [3, 448, 456, "#70e8c8"], [3, 465, 470, "#3a8a50"], [3, 506, 510, "#3a8a70"], [3, 720, 724, "#2a6a50"], [3, 760, 812, "#7a4e38"], [3, 815, 822, "#4a9070"], [3, 830, 838, "#8a9040"], [3, 853, 866, "#5a9a60"],
  [3, 880, 895, "#b06030"], [3, 905, 913, "#8a9040"], [3, 922, 935, "#a05a30"], [3, 940, 952, "#a05a30"], [3, 958, 964, "#8a8040"], [3, 1025, 1050, "#30a888"], [3, 1052, 1055, "#d0f0e8"], [3, 1056, 1070, "#203060"],
  [3, 1310, 1316, "#5a8a50"], [3, 1325, 1332, "#a06030"], [3, 1345, 1350, "#5a9a50"], [3, 1362, 1368, "#5a9a50"], [3, 1414, 1418, "#407a80"],
  [4, 448, 455, "#2060e0"], [4, 460, 470, "#8a5060"], [4, 506, 512, "#803060"], [4, 752, 756, "#8a5a30"], [4, 762, 768, "#3a4a90"], [4, 780, 785, "#6a6a80"], [4, 806, 815, "#4a6a50"], [4, 824, 835, "#e070b8"], [4, 838, 845, "#a05a30"],
  [4, 860, 864, "#8a5a30"], [4, 880, 884, "#a05a28"], [4, 902, 908, "#8a5a30"], [4, 918, 924, "#8a5a30"], [4, 930, 935, "#8a5a30"], [4, 944, 950, "#8a5a30"],
  [4, 1028, 1033, "#a05a28"], [4, 1037, 1055, "#0a6060"], [4, 1058, 1073, "#80b0b8"], [4, 1191, 1193, "#6a6a50"], [4, 1416, 1432, "#90b0c0"],
  [5, 456, 465, "#4a3a70"], [5, 506, 510, "#503090"], [5, 818, 824, "#805080"], [5, 1028, 1045, "#7060b0"], [5, 1048, 1056, "#a03080"], [5, 1416, 1420, "#5030a0"],
  [6, 820, 824, "#207060"], [6, 1030, 1040, "#30706a"], [6, 1042, 1046, "#808080"], [6, 1050, 1056, "#204060"], [6, 1416, 1419, "#205040"],
];

function buildTrace() {
  const shapes = new Map();
  const add = (color, x, y, w, h) => {
    const d = `M${(x - X0).toFixed(1)} ${y - Y0}h${w.toFixed(1)}v${h}h${(-w).toFixed(1)}z`;
    shapes.set(color, (shapes.get(color) || "") + d);
  };
  const rand = mulberry(42);
  const pick = (list) => list[Math.floor(rand() * list.length)];

  // chart background: dark column streaks
  add("#15181a", 528, Y0, 2273, 1065);
  for (let x = 528; x < 2801; x += 4 + rand() * 5) {
    add("#0f1214", x, Y0, 1 + rand() * 3, 1065);
  }
  add("#0f1214", 528, Y0, 60, 1065);
  add("#0f1214", 1446, Y0, 30, 1065);
  add("#0f1214", 1600, Y0, 24, 1065);
  add("#2e3032", 493, 1082, 35, 1055);

  // alephium.wallet state bar
  const solid = (x0, x1, y, h, color = GREEN, seams = 24) => {
    add(color, x0, y, x1 - x0, h);
    for (let x = x0 + seams * rand(); x < x1; x += seams * (0.5 + rand())) {
      add(color === GREEN ? SEAM : "#2a2c2e", x, y, 1, h);
    }
  };
  const mixed = (x0, x1, y, h, p) => {
    let x = x0;
    while (x < x1) {
      const w = 1.5 + rand() * 3.5;
      add(rand() < p ? GREEN : GREY, x, y, Math.min(w, x1 - x), h);
      if (rand() < 0.5) add("#24282a", x + w, y, 1, h);
      x += w + 1;
    }
  };
  const aY = 1086;
  const aH = 16;
  add(GREEN, 517, aY, 5, aH);
  solid(528, 599, aY, aH);
  solid(599, 869, aY, aH, GREY, 18);
  mixed(869, 1012, aY, aH, 0.42);
  solid(1012, 1070, aY, aH);
  mixed(1070, 1478, aY, aH, 0.38);
  solid(1478, 1577, aY, aH);
  mixed(1577, 1608, aY, aH, 0.4);
  solid(1608, 1644, aY, aH);
  mixed(1644, 2801, aY, aH, 0.5);

  // mqt_v_js state bar
  const mY = 1532;
  const mH = 16;
  solid(598, 699, mY, mH, GREY, 200);
  solid(699, 866, mY, mH, GREEN, 36);
  solid(866, 876, mY, mH, GREY, 40);
  solid(876, 1369, mY, mH, GREEN, 38);
  add("#6fe0c0", 1303, mY, 16, mH);
  solid(1369, 1382, mY, mH, GREY, 40);
  solid(1382, 1906, mY, mH, GREEN, 36);
  mixed(1906, 1972, mY, mH, 0.2);
  solid(1972, 2050, mY, mH, GREEN, 26);
  solid(2050, 2801, mY, mH, GREY, 400);

  // dim scheduling lines across the first rows
  const dim = {
    0: ["#1f4a5e", "#16404f"],
    1: ["#45405a", "#3c3c42", "#4c3f60"],
    2: ["#4a3f5a", "#3c4a50", "#5a4a35", "#2f3a70", "#3c3c42"],
    3: ["#2d4a3e", "#33473f", "#2a3f38"],
  };
  const dimRow = (r, x0, x1, pitch) => {
    for (let x = x0; x < x1; x += pitch * (0.5 + rand())) {
      add(pick(dim[r]), x, rowY(r), 1 + rand(), 26);
    }
  };
  dimRow(0, 1110, 1900, 16);
  dimRow(0, 1900, 2801, 70);
  dimRow(1, 1088, 2800, 11);
  dimRow(2, 1088, 2800, 11);
  dimRow(3, 1090, 1900, 9);
  dimRow(3, 1900, 2795, 11);
  for (const zx of [716, 742, 805, 830, 868, 880, 895, 912]) {
    add(pick(dim[2]), fromA(zx), rowY(1), 1, 26);
  }

  // flame blocks
  for (const [r, a, b, c] of FLAMES_A) add(c, fromA(a), rowY(r), Math.max(1.5, (b - a) / 1.568), 26);
  for (const [r, a, b, c] of FLAMES_B) add(c, fromB(a), rowY(r), Math.max(1.5, (b - a) / 2.01), 26);
  for (let r = 7; r < 11; r++) add("#2e3134", 1327, rowY(r), 1.5, 26);

  // mqt_v_js flames
  const mq = [
    [0, 709, 720, "#9a2a6a"], [0, 735, 763, "#8a5a42"], [0, 807, 817, "#8a8a70"], [0, 817, 833, "#149a80"], [0, 859, 860, "#3a3a40"], [0, 880, 881.5, "#3a70c0"],
    [0, 910, 912, "#3a70d0"], [0, 965, 966.5, "#7a8a90"], [0, 985, 986.5, "#6a7a80"], [0, 1002, 1003.5, "#6a7a80"],
    [1, 805, 809, "#2a60c0"], [1, 809, 817, "#7a7a60"], [1, 817, 830, "#7a60a8"], [1, 830, 833, "#404048"], [1, 850, 851.5, "#3a5a90"], [1, 965, 966, "#2a4a60"],
    [1, 709, 710, "#2a2a40"], [1, 734, 735, "#4a4a4a"],
    [2, 805, 806.5, "#5a5a60"], [2, 811, 817, "#7a60a8"], [2, 834, 837, "#4a4aa0"], [2, 912, 913.5, "#4a7a90"],
  ];
  for (const [r, a, b, c] of mq) add(c, a, 1576 + r * 28, b - a, 26);

  // collapsed thread specks
  const specks = (y, h, ranges, colors, pitch) => {
    for (const [a, b] of ranges) {
      for (let x = a; x < b; x += pitch * (0.6 + rand() * 0.8)) add(pick(colors), x, y, 1 + rand(), h);
    }
  };
  const blue = ["#2f8499", "#2a6fa0", "#3a6ea8", "#3f98a0"];
  const blueDim = ["#1d4a58", "#1f4560", "#264060"];
  specks(1729, 6, [[1071, 1321], [1643, 1797]], blue, 2.5);
  specks(1729, 6, [[856, 1071]], blueDim, 26);
  specks(1729, 6, [[1321, 1640], [1797, 2801]], blueDim, 7);
  const pink = ["#5a3e4c", "#4f3a48"];
  specks(1959, 4, [[1092, 1341], [1582, 1610], [1648, 1793], [1818, 1890], [940, 960]], pink, 5);
  const greens = ["#2d7a68", "#24605c", "#3a5578", "#5a9a88", "#2f4a5c"];
  specks(2018, 8, [[958, 1028], [1455, 1640]], greens, 3);
  specks(2018, 8, [[607, 712]], greens, 5);
  specks(2018, 8, [[712, 836]], greens, 8);
  specks(2018, 8, [[545, 607], [836, 958], [1028, 1455], [1640, 1990]], greens, 22);
  specks(2018, 8, [[1990, 2340]], ["#24464c", "#2f3a4c"], 40);
  const violet = ["#423a78", "#3a3268"];
  specks(2075, 6, [[1100, 1335], [1580, 1607], [1648, 1800], [1817, 1890], [945, 955]], violet, 5);
  specks(2133, 3, [[860, 960], [1000, 1035], [1320, 1385]], ["#2f4a5c", "#3a3a58"], 7);

  return [...shapes.entries()];
}

const TRACE = buildTrace();

const TraceChart = () => (
  <svg width="2308" height="1065" viewBox="0 0 2308 1065" style={{ display: "block", flex: "none" }}>
    {TRACE.map(([color, d]) => (
      <path key={color} d={d} fill={color} />
    ))}
  </svg>
);

const ToolStripLeft = () => (
  <Strip>
    <ToolButton $selected><Ico name="folder" /></ToolButton>
    <ToolButton><Ico name="commit" /></ToolButton>
    <ToolButton><Ico name="structure" /></ToolButton>
    <ToolButton><Ico name="pull" /></ToolButton>
    <StripSep />
    <ToolButton $selected><Ico name="hammerTable" /></ToolButton>
    <ToolButton><Dots /></ToolButton>
    <StripBottom>
      <ToolButton $active><Ico name="gauge" /></ToolButton>
      <ToolButton><Ico name="hammer" /></ToolButton>
      <ToolButton><Gem size={40} strokeWidth={1.2} /></ToolButton>
      <ToolButton><Ico name="cat" /></ToolButton>
      <ToolButton><CircleAlert size={40} strokeWidth={1.2} /></ToolButton>
      <ToolButton><SquareTerminal size={40} strokeWidth={1.2} /></ToolButton>
      <ToolButton><Ico name="vcs" /></ToolButton>
    </StripBottom>
  </Strip>
);

const ToolStripRight = () => (
  <Strip>
    <ToolButton>
      <IconWrap>
        <Bell size={40} strokeWidth={1.2} />
        <Badge $right={-2} $top={-4} $size={15} $color="#e55765" />
      </IconWrap>
    </ToolButton>
    <ToolButton $selected><Ico name="elephant" /></ToolButton>
    <ToolButton><Ico name="phoneAndroid" /></ToolButton>
    <ToolButton><Ico name="phoneLaptop" /></ToolButton>
    <ToolButton><Ico name="chatSpark" /></ToolButton>
  </Strip>
);

const Header = () => (
  <TitleBar>
    <Lights>
      <Light $color="#ff5f57" />
      <Light $color="#febc2e" />
      <Light $color="#28c840" />
    </Lights>
    <TitleItem $gap={12}>
      <ProjectBadge>A</ProjectBadge>
      Alephium
      <Chevron />
    </TitleItem>
    <TitleItem $left="52px" $gap={10}>
      <Ico name="branch" size={34} />
      improve-splashscreen-perf
      <Chevron />
    </TitleItem>
    <TitleItem $left="auto" $gap={6} $right={80}>
      <IconWrap>
        <Ico name="device" size={34} />
        <Badge $right={2} $top={24} $size={9} $color="#3ddc55" />
      </IconWrap>
      OnePlus ONEPLUS A6013
      <Chevron />
    </TitleItem>
    <TitleItem $gap={10} $right={38}>
      <Ico name="android" size={28} color="#5dd39e" />
      app
      <Chevron />
    </TitleItem>
    <TitleItem $gap={28} $right={133}>
      <svg width="40" height="40" viewBox="0 0 20 20" fill="none" stroke="#57a75e" strokeWidth="1.1" strokeLinejoin="round">
        <path d="M5 3.500l11 6.500-11 6.500z" />
      </svg>
      <Bug size={40} strokeWidth={1.3} color="#57a75e" />
      <Kebab />
    </TitleItem>
    <TitleItem $gap={40}>
      <Ico name="hammerRun" />
      <Ico name="cast" />
      <Ico name="sync" />
      <Ico name="bugArrow" />
      <Ico name="gradleArrow" />
      <Search size={40} strokeWidth={1.2} />
      <IconWrap>
        <Settings size={40} strokeWidth={1.2} />
        <Badge $right={-4} $top={-2} $size={16} $color="#f2c55c" />
      </IconWrap>
      <CircleUserRound size={40} strokeWidth={1.2} />
    </TitleItem>
  </TitleBar>
);

const ProjectPanels = () => (
  <TopColumn>
    <AndroidPanel>
      <PanelTitle>
        Android
        <Chevron />
      </PanelTitle>
      <TreeSelected>
        <Chevron />
        <Spacer $w={0} />
        <IconWrap>
          <Ico name="folder" size={32} />
          <ModuleTag />
        </IconWrap>
        app
      </TreeSelected>
      <TreeRow $indent={41}>
        <Chevron dir="right" />
        <Spacer $w={3} />
        <Ico name="folder" size={32} color="#548af7" />
        manifests
      </TreeRow>
    </AndroidPanel>
    <BuildPanel>
      <BuildTitle>Build Variants</BuildTitle>
      <VariantHead>
        <VariantCell>Module</VariantCell>
        <VariantCell>Active Build Variant</VariantCell>
        <VariantCell>Active ABI</VariantCell>
      </VariantHead>
      <ComboTop />
    </BuildPanel>
  </TopColumn>
);

const WelcomeHints = () => (
  <EmptyPanel>
    <HintRow>Search Everywhere <HintKey>Double ⇧</HintKey></HintRow>
    <HintRow>Go to File <HintKey>⇧⌘O</HintKey></HintRow>
    <HintRow>Recent Files <HintKey>⌘E</HintKey></HintRow>
    <HintRow>Navigation Bar <HintKey>⌘↑</HintKey></HintRow>
  </EmptyPanel>
);

const gradleRows = [
  { indent: 30, dir: "down", name: "Alephium" },
  { indent: 67, dir: "right", name: "Alephium", note: "(root)" },
  { indent: 67, dir: "right", name: "expo-dev-launcher-gradle-plugin" },
  { indent: 67, dir: "right", name: "expo-gradle-plugin" },
];

const Gradle = () => (
  <GradlePanel>
    <GradleHead>Gradle</GradleHead>
    <GradleTools>
      <ToolSlot $w={48}><Ico name="download" size={32} /></ToolSlot>
      <ToolSep />
      <ToolSlot><Ico name="runTasks" size={32} /></ToolSlot>
      <ToolSlot $w={48}><Ico name="offline" size={32} /></ToolSlot>
      <ToolSep $after={14} />
      <ToolSlot $w={49}><Ico name="analyze" size={32} /></ToolSlot>
      <ToolSep />
      <ToolSlot><Ico name="expand" size={32} /></ToolSlot>
      <ToolSlot $w={49}><Ico name="collapse" size={32} /></ToolSlot>
      <ToolSep $after={15} />
      <ToolSlot $w={44}><Settings size={32} strokeWidth={1.3} /></ToolSlot>
      <InfoDot>i</InfoDot>
      <LinkText>Task list not built...</LinkText>
    </GradleTools>
    <GradleTree>
      {gradleRows.map((r, i) => (
        <TreeRow key={i} $indent={r.indent} $gap={14}>
          <Chevron dir={r.dir} />
          <Ico name="elephant" size={30} />
          <TreeName>
            {r.name} {r.note && <Muted>{r.note}</Muted>}
          </TreeName>
        </TreeRow>
      ))}
    </GradleTree>
  </GradlePanel>
);

const sections = [
  { name: "Display", help: true },
  { name: "Frame Lifecycle (org.alephium.wallet.MainActivity#0)", help: true },
  { name: "CPU cores (8)" },
  { name: "Process Memory (RSS)", help: true },
];

const threads = [
  { name: "alephium.wallet", open: true, height: 447 },
  { name: "mqt_v_js", open: true, height: 193 },
  { name: "RenderThread", height: 58 },
  { name: "RenderThread", height: 58 },
  { name: "RenderThread", height: 58 },
  { name: "RenderThread", height: 58 },
  { name: "GPU completion", height: 58 },
  { name: "Jit thread pool", height: 58 },
  { name: "HWC release", height: 58 },
];

const axisCells = Array.from({ length: 16 }, (_, i) => ({
  major: i % 2 === 0,
  label: i % 2 === 0 ? `0${i / 2}.000` : "",
}));

const Profiler = () => (
  <MainPanel>
    <TabBar>
      <ToolTitle>Profiler</ToolTitle>
      <PlainTab $right={48}>Home</PlainTab>
      <PlainTab $right={32}>Past Recordings</PlainTab>
      <CaptureTab>
        <ChipIcon><Ico name="chip" size={30} /></ChipIcon>
        Capture System Activities (System Trace)
        <TabClose>
          <svg width="20" height="20" viewBox="0 0 20 20" stroke="currentColor" strokeWidth="1.8">
            <path d="M4 4l12 12M16 4L4 16" />
          </svg>
        </TabClose>
      </CaptureTab>
      <PushRight $gap={12}>
        <Kebab />
        <svg width="40" height="40" viewBox="0 0 40 40" stroke="#ced0d6" strokeWidth="2.5">
          <path d="M7 20h26" />
        </svg>
      </PushRight>
    </TabBar>
    <VsyncRow>
      <CheckBox>
        <svg width="24" height="24" viewBox="0 0 20 20" fill="none" stroke="#fff" strokeWidth="2.4">
          <path d="M4 10.500l4 4.500 8-10" />
        </svg>
      </CheckBox>
      VSync guide
      <PushRight $top={5}>
        <CircleMinus size={28} strokeWidth={1.7} color="#ced0d6" />
        <CirclePlus size={28} strokeWidth={1.7} color="#ced0d6" />
        <Ico name="fit" size={28} />
        <Ico name="frame" size={28} color="#5a5d63" />
      </PushRight>
    </VsyncRow>
    <Split>
      <LeftPane>
        <CpuWrap>
          <CpuChart />
          <CpuLabel $x={7} $y={10} $color="#9bc0e0">CPU Usage</CpuLabel>
          <CpuLabel $x={9} $y={92} $color="#a8c4dc">00.000</CpuLabel>
          <CpuLabel $x={879} $y={92} $color="#c0d4e4">05.000</CpuLabel>
          <CpuLabel $x={1749} $y={92}>10.000</CpuLabel>
        </CpuWrap>
        {sections.map((s) => (
          <SectionRow key={s.name}>
            {s.name}
            {s.help && <Question>?</Question>}
            <ExpandLabel>
              Expand Section
              <Chevron />
            </ExpandLabel>
          </SectionRow>
        ))}
        <SectionRow>
          Threads (92)
          <Question>?</Question>
          <PushRight $gap={11}>
            <Kebab />
            <DottedSep />
            <CollapseArrow><Chevron dir="up" /></CollapseArrow>
          </PushRight>
        </SectionRow>
        <ThreadBody>
          <LabelColumn>
            {threads.map((t, i) => (
              <ThreadLabel key={i} $height={t.height}>
                <ThreadLine>
                  <Ico name="thread" size={32} color="#ced0d6" />
                  <Chevron dir={t.open ? "down" : "right"} size={20} />
                  <ThreadName>{t.name}</ThreadName>
                </ThreadLine>
              </ThreadLabel>
            ))}
          </LabelColumn>
          <ChartColumn>
            <TraceChart />
            <NoData>No data available.</NoData>
            <Axis>
              {axisCells.map((c, i) => (
                <AxisCell key={i} $major={c.major}>{c.label}</AxisCell>
              ))}
            </Axis>
          </ChartColumn>
        </ThreadBody>
      </LeftPane>
      <PaneGutter />
      <RightPane>
        <AnalysisTabs>
          <AnalysisTab>Analysis</AnalysisTab>
          <AnalysisTab $active>All threads</AnalysisTab>
          <AnalysisTab>All Frames</AnalysisTab>
        </AnalysisTabs>
        <SubTabs>
          <SubTab>Top Down</SubTab>
          <SubTab>Flame Chart</SubTab>
          <SubTab>Bottom Up</SubTab>
        </SubTabs>
        <SummaryWrap>
          <SummaryButton>Summary</SummaryButton>
        </SummaryWrap>
        <InfoGrid>
          <span>Time Range</span>
          <span>00:00.000 - 00:07.926</span>
          <span>Duration</span>
          <span>7.93 s</span>
        </InfoGrid>
        <UsageRow>
          <Chevron dir="right" />
          Usage Instructions
          <UsageLine />
        </UsageRow>
      </RightPane>
    </Split>
  </MainPanel>
);

export default function App() {
  return (
    <Page>
      <Global />
      <Window>
        <Header />
        <Body>
          <ToolStripLeft />
          <Center>
            <TopRow>
              <ProjectPanels />
              <WelcomeHints />
              <Gradle />
            </TopRow>
            <Profiler />
          </Center>
          <ToolStripRight />
        </Body>
        <StatusBar>
          <ModuleDot />
          android
          <CrumbArrow><Chevron dir="right" /></CrumbArrow>
          <ModuleDot />
          app
          <PushRight>
            <Ico name="eventLog" size={36} color="#ced0d6" />
          </PushRight>
        </StatusBar>
      </Window>
    </Page>
  );
}
